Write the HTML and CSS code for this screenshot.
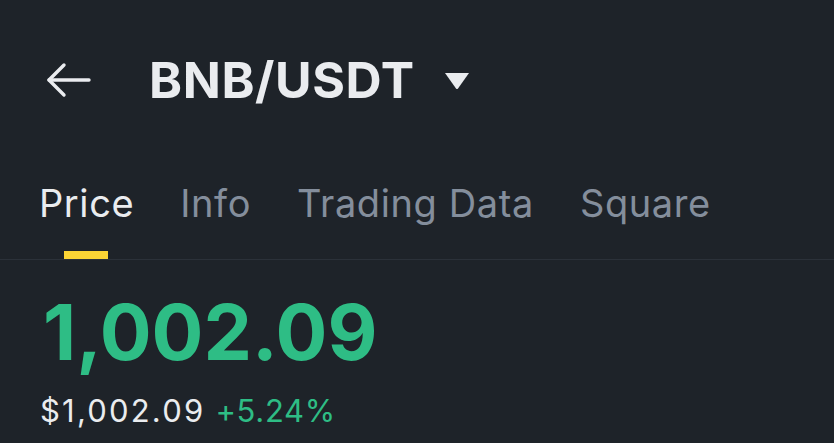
FILE: index.html
```html
<!DOCTYPE html>
<html>
<head>
<meta charset="utf-8">
<link rel="stylesheet" href="styles.css">
</head>
<body>
<div class="app">
  <header class="header">
    <svg class="back" width="46" height="36" viewBox="0 0 46 36" fill="none" stroke="#eaecef" stroke-width="3.4" stroke-linecap="round" stroke-linejoin="round">
      <path d="M3 18 H43"/>
      <path d="M18 3 L3 18 L18 33"/>
    </svg>
    <h1 class="title">BNB/USDT</h1>
    <svg class="caret" width="26" height="18" viewBox="0 0 26 18">
      <path d="M1 1 H25 L14 16.5 Q13 17.5 12 16.5 Z" fill="#eaecef"/>
    </svg>
  </header>
  <nav class="tabs">
    <div class="tab active">Price<span class="bar"></span></div>
    <div class="tab">Info</div>
    <div class="tab">Trading Data</div>
    <div class="tab">Square</div>
  </nav>
  <section class="price">
    <div class="last">1,002.09</div>
    <div class="sub"><span class="usd">$1,002.09</span><span class="chg">+5.24%</span></div>
  </section>
</div>
</body>
</html>
```
FILE: styles.css
```css
html, body {
  margin: 0;
  padding: 0;
  background: #1e2329;
}
.app {
  width: 834px;
  height: 443px;
  overflow: hidden;
  font-family: Inter, "Noto Sans", sans-serif;
  color: #eaecef;
}
.header {
  height: 160px;
  display: flex;
  align-items: center;
  padding-left: 46px;
  box-sizing: border-box;
  padding-bottom: 1px;
}
.back {
  flex: none;
}
.title {
  margin: 0 0 0 57px;
  font-size: 50px;
  font-weight: 700;
  line-height: 1;
  letter-spacing: 0.6px;
}
.caret {
  margin-left: 29px;
  margin-top: 2px;
}
.tabs {
  display: flex;
  gap: 46px;
  padding-left: 39px;
  height: 100px;
  border-bottom: 1px solid #2b3139;
  box-sizing: border-box;
}
.tab {
  position: relative;
  font-size: 38px;
  font-weight: 400;
  letter-spacing: 0.6px;
  color: #848e9c;
  padding-top: 19px;
  line-height: 48px;
}
.tab.active {
  color: #eaecef;
}
.bar {
  position: absolute;
  left: 25px;
  bottom: 0;
  width: 44px;
  height: 8px;
  background: #fcd535;
}
.price {
  padding-left: 40px;
}
.last {
  color: #2ebd85;
  font-size: 77px;
  font-weight: 700;
  line-height: 1;
  margin-top: 34px;
  padding-left: 3px;
}
.sub {
  margin-top: 21px;
  font-size: 31px;
  display: flex;
  gap: 10px;
}
.usd {
  letter-spacing: 2.2px;
}
.chg {
  color: #2ebd85;
  letter-spacing: 0.7px;
}
```
